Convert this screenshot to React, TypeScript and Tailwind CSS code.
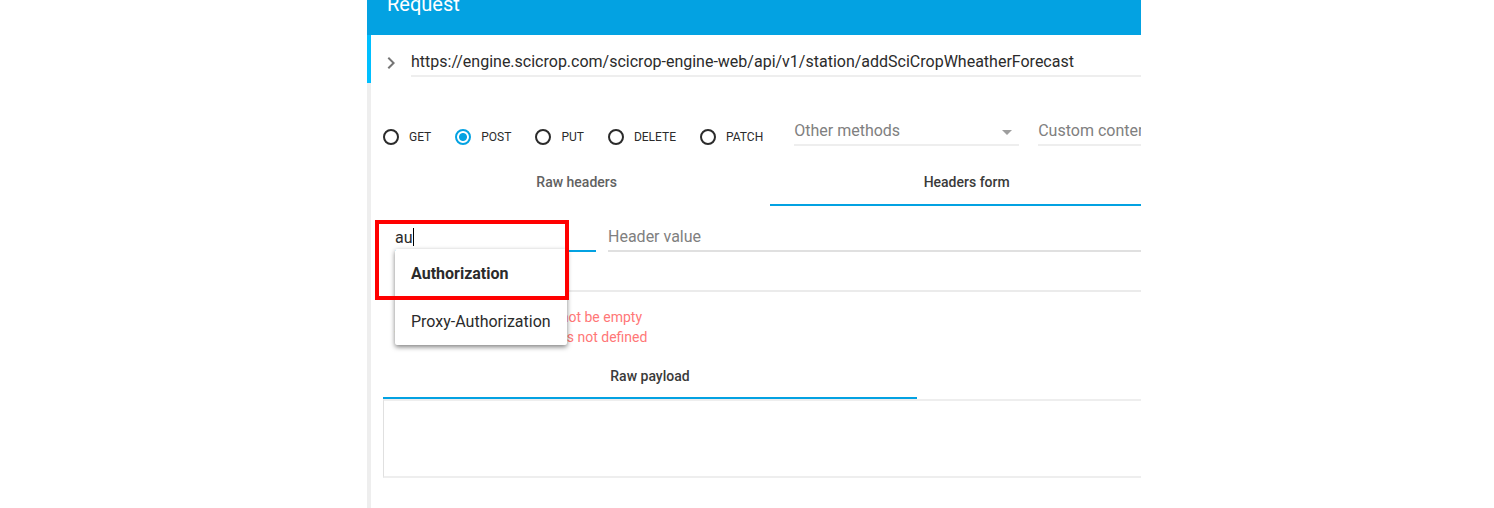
import { useState } from "react";

const METHODS = ["GET", "POST", "PUT", "DELETE", "PATCH"];

function RadioOption({ name, checked, onSelect }: { name: string; checked: boolean; onSelect: () => void }) {
  return (
    <label className="flex h-4 shrink-0 cursor-pointer items-center gap-2.5 text-xs leading-4">
      <input
        type="radio"
        name="method"
        value={name}
        checked={checked}
        onChange={onSelect}
        className="size-4 appearance-none rounded-full border-2 border-[#2b2b2b] checked:border-[#03a2e2] checked:bg-[radial-gradient(circle,#03a2e2_0_3.5px,transparent_4.5px)]"
      />
      {name}
    </label>
  );
}

function HeaderNameField() {
  const [value, setValue] = useState("au");
  return (
    <div className="relative w-[201px] shrink-0">
      <input
        aria-label="Header name"
        value={value}
        onChange={(e) => setValue(e.target.value)}
        className="h-7 w-full border-b-2 border-[#03a2e2] bg-transparent caret-transparent outline-none"
      />
      <span className="pointer-events-none absolute top-1 left-[18px] h-[18px] w-px bg-black" />
      <ul className="absolute top-[25px] left-0 z-10 w-[172px] rounded-xs bg-white shadow-[0_2px_5px_rgba(0,0,0,0.5)]">
        <li>
          <button type="button" className="flex h-12 w-full items-center px-4 pt-0.5 font-bold whitespace-nowrap">
            Authorization
          </button>
        </li>
        <li>
          <button type="button" className="flex h-12 w-full items-center px-4 pt-0.5 whitespace-nowrap">
            Proxy-Authorization
          </button>
        </li>
      </ul>
      <div className="pointer-events-none absolute -top-1 -left-5 z-20 h-20 w-[194px] border-4 border-[#ff0000]" />
    </div>
  );
}

export default function App() {
  const [method, setMethod] = useState("POST");
  return (
    <div className="min-h-screen bg-white pr-[353px] pl-[367px] font-['Roboto',sans-serif] text-base text-[#2b2b2b]">
      <main className="flex min-h-screen flex-col overflow-hidden">
        <header className="-mt-7 flex h-[63px] shrink-0 items-center bg-[#03a2e2] px-5">
          <h1 className="text-xl text-white">Request</h1>
        </header>

        <div className="flex h-12 shrink-0 items-start border-l-4 border-[#00bfff] pt-3.5">
          <button type="button" aria-label="Expand URL editor" className="flex h-7 w-10 shrink-0 items-center justify-center">
            <svg viewBox="0 0 24 24" className="size-6 fill-[#757575]">
              <path d="M10 6 8.59 7.41 13.17 12l-4.58 4.59L10 18l6-6z" />
            </svg>
          </button>
          <input
            aria-label="Request URL"
            defaultValue="https://engine.scicrop.com/scicrop-engine-web/api/v1/station/addSciCropWheatherForecast"
            className="h-7 min-w-0 flex-1 border-b-2 border-[#eeeeee] pb-px outline-none"
          />
        </div>

        <div className="flex-1 border-l-4 border-[#eeeeee] pt-[35px] pl-3">
          <div className="flex items-end">
            <div className="flex shrink-0 gap-6 pb-px">
              {METHODS.map((m) => (
                <RadioOption key={m} name={m} checked={m === method} onSelect={() => setMethod(m)} />
              ))}
            </div>
            <div className="relative ml-[31px] w-[225px] shrink-0">
              <select
                aria-label="Other methods"
                className="h-7 w-full appearance-none border-b-2 border-[#eeeeee] bg-transparent text-[#808080] outline-none"
              >
                <option>Other methods</option>
              </select>
              <svg viewBox="0 0 10 5" className="pointer-events-none absolute top-3 right-[7px] h-[5px] w-2.5 fill-[#9e9e9e]">
                <path d="M0 0h10L5 5z" />
              </svg>
            </div>
            <div className="ml-[19px] min-w-0 flex-1 overflow-hidden">
              <input
                aria-label="Custom content type"
                placeholder="Custom content type"
                className="h-7 w-56 border-b-2 border-[#eeeeee] pb-px outline-none placeholder:text-[#808080]"
              />
            </div>
          </div>

          <div role="tablist" className="-mr-[22px] mt-3 flex h-12 text-sm font-medium">
            <button type="button" role="tab" aria-selected="false" className="flex-auto border-b-2 border-transparent pt-px text-[#616161]">
              Raw headers
            </button>
            <button type="button" role="tab" aria-selected="true" className="flex-auto border-b-2 border-[#03a2e2] pt-px text-[#3a3a3a]">
              Headers form
            </button>
          </div>

          <div className="pl-3">
            <div className="mt-[18px] flex gap-3">
              <HeaderNameField />
              <input
                aria-label="Header value"
                placeholder="Header value"
                className="h-7 min-w-0 flex-1 border-b-2 border-[#e0e0e0] pb-px outline-none placeholder:text-[#808080]"
              />
            </div>
            <div className="h-10 border-b-2 border-[#ebebeb]" />
            <div className="pt-[15px] text-sm leading-5 text-[#ff7777]">
              <p>Header name or value can not be empty</p>
              <p>The "Content-Type" header is not defined</p>
            </div>
          </div>

          <div role="tablist" className="mt-1 flex h-12 text-sm font-medium">
            <button type="button" role="tab" aria-selected="true" className="w-[534px] border-b-2 border-[#03a2e2] pt-[3px] text-[#3a3a3a]">
              Raw payload
            </button>
          </div>
          <div className="-mr-1">
            <textarea
              aria-label="Payload"
              className="block h-[79px] w-full resize-none border-y-2 border-l border-y-[#eeeeee] border-l-[#e0e0e0] p-2 outline-none"
            />
          </div>
        </div>
      </main>
    </div>
  );
}
